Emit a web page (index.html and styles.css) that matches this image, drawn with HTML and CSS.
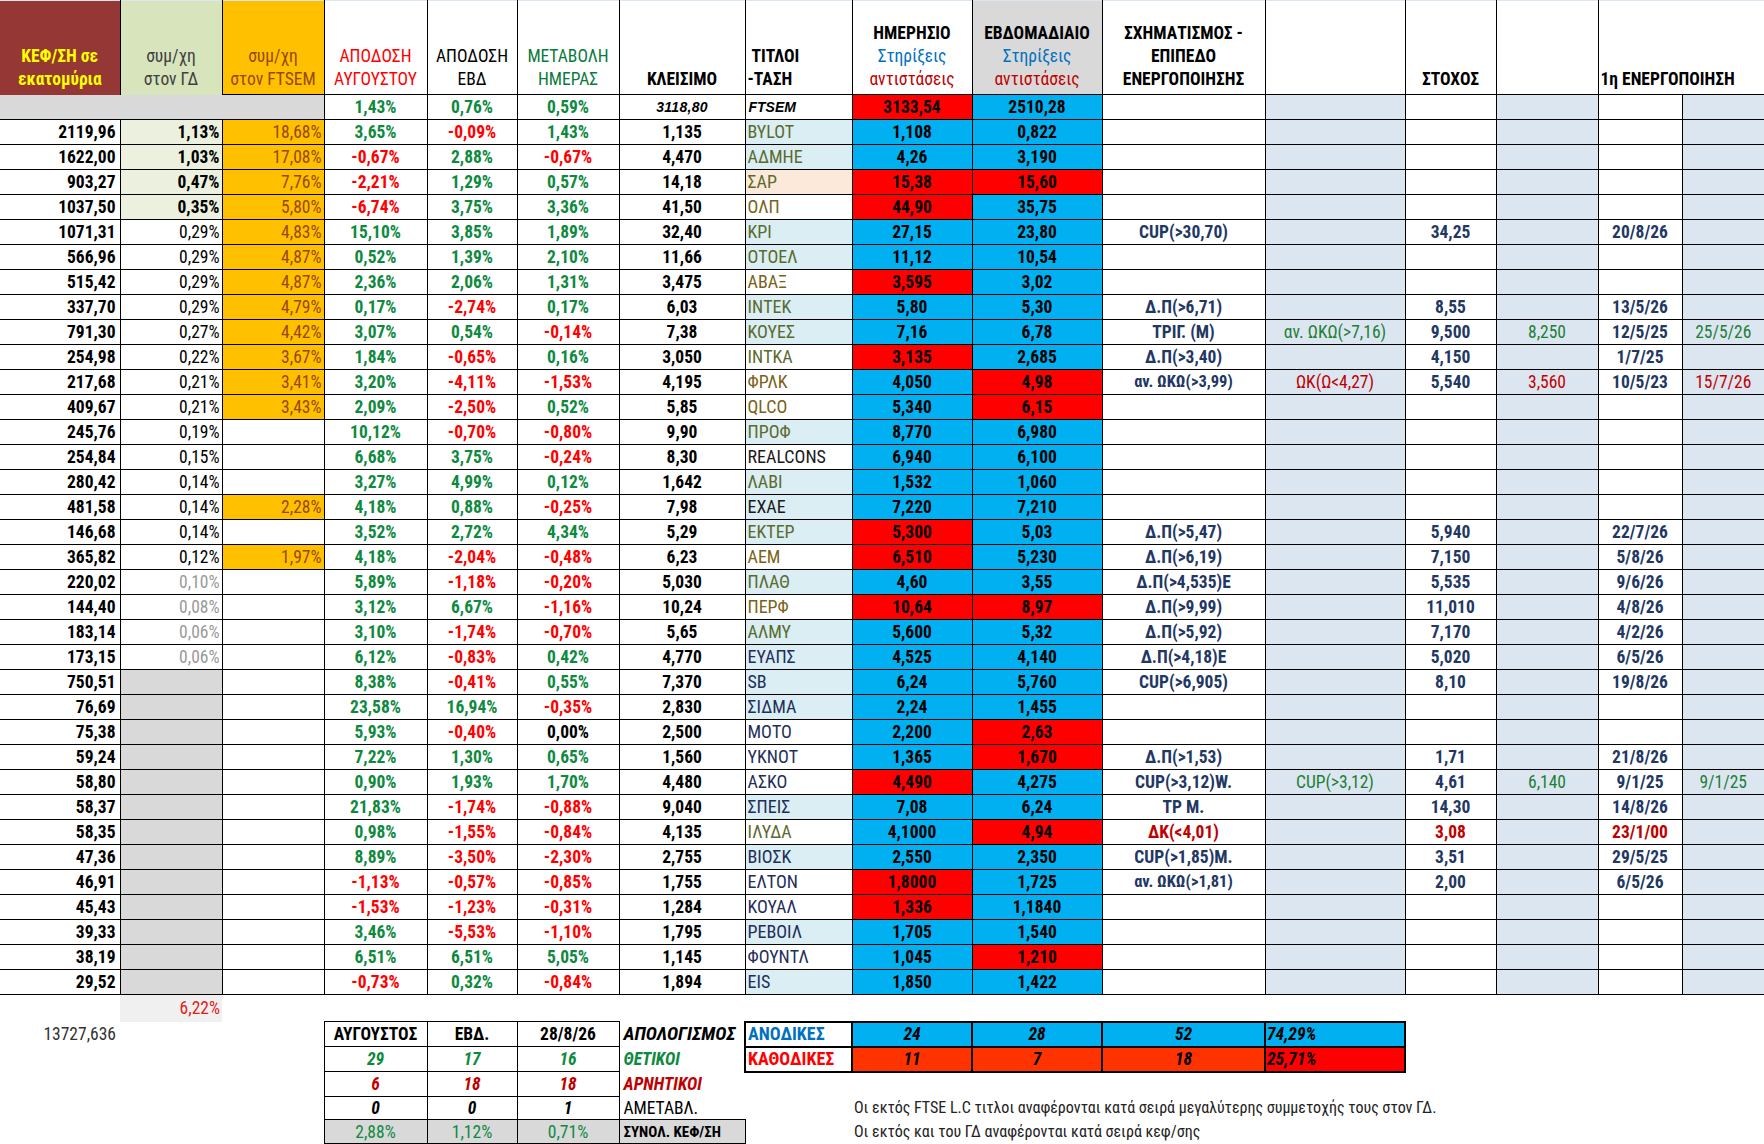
FILE: index.html
```html
<!DOCTYPE html>
<html lang="el">
<head>
<meta charset="utf-8">
<title>FTSEM</title>
<link rel="stylesheet" href="styles.css">
</head>
<body>
<table class="sheet">
<colgroup>
<col style="width:120px"><col style="width:102px"><col style="width:102px"><col style="width:103px"><col style="width:90px"><col style="width:102px"><col style="width:126px"><col style="width:107px"><col style="width:120px"><col style="width:130px"><col style="width:163px"><col style="width:140px"><col style="width:91px"><col style="width:102px"><col style="width:84px"><col style="width:82px">
</colgroup>
<tbody class="head">
<tr class="hd">
<td class="h0">ΚΕΦ/ΣΗ σε<br>εκατομύρια</td>
<td class="h1">συμ/χη<br>στον ΓΔ</td>
<td class="h2">συμ/χη<br>στον FTSEM</td>
<td class="h3">ΑΠΟΔΟΣΗ<br>ΑΥΓΟΥΣΤΟΥ</td>
<td class="h4">ΑΠΟΔΟΣΗ<br>ΕΒΔ</td>
<td class="h5">ΜΕΤΑΒΟΛΗ<br>ΗΜΕΡΑΣ</td>
<td class="hb">ΚΛΕΙΣΙΜΟ</td>
<td class="hb hl">&nbsp;ΤΙΤΛΟΙ<br>-ΤΑΣΗ</td>
<td class="hb">ΗΜΕΡΗΣΙΟ<br><span class="sup">Στηρίξεις</span><br><span class="res">αντιστάσεις</span></td>
<td class="hb h9">ΕΒΔΟΜΑΔΙΑΙΟ<br><span class="sup">Στηρίξεις</span><br><span class="res">αντιστάσεις</span></td>
<td class="hb">ΣΧΗΜΑΤΙΣΜΟΣ -<br>ΕΠΙΠΕΔΟ<br>ΕΝΕΡΓΟΠΟΙΗΣΗΣ</td>
<td class="hb"></td>
<td class="hb">ΣΤΟΧΟΣ</td>
<td class="hb"></td>
<td class="hb hl" colspan="2">1η ΕΝΕΡΓΟΠΟΙΗΣΗ</td>
</tr>
<tr class="ix">
<td colspan="3" class="ixg"></td>
<td class="g">1,43%</td><td class="g">0,76%</td><td class="g">0,59%</td>
<td class="ixc">3118,80</td>
<td class="ixt">FTSEM</td>
<td class="R">3133,54</td><td class="B">2510,28</td>
<td></td><td class="lb"></td><td></td><td class="lb"></td><td></td><td class="lb"></td>
</tr>
</tbody>
<tbody class="data">
<tr><td>2119,96</td><td class="gl">1,13%</td><td class="or">18,68%</td><td class="g">3,65%</td><td class="r">-0,09%</td><td class="g">1,43%</td><td>1,135</td><td class="tl ol">BYLOT</td><td class="B">1,108</td><td class="B">0,822</td><td></td><td></td><td></td><td></td><td></td><td></td></tr>
<tr><td>1622,00</td><td class="gl">1,03%</td><td class="or">17,08%</td><td class="r">-0,67%</td><td class="g">2,88%</td><td class="r">-0,67%</td><td>4,470</td><td class="tl ol">ΑΔΜΗΕ</td><td class="B">4,26</td><td class="B">3,190</td><td></td><td></td><td></td><td></td><td></td><td></td></tr>
<tr><td>903,27</td><td class="gl">0,47%</td><td class="or">7,76%</td><td class="r">-2,21%</td><td class="g">1,29%</td><td class="g">0,57%</td><td>14,18</td><td class="tp ol">ΣΑΡ</td><td class="R">15,38</td><td class="R">15,60</td><td></td><td></td><td></td><td></td><td></td><td></td></tr>
<tr><td>1037,50</td><td class="gl">0,35%</td><td class="or">5,80%</td><td class="r">-6,74%</td><td class="g">3,75%</td><td class="g">3,36%</td><td>41,50</td><td class="br">ΟΛΠ</td><td class="R">44,90</td><td class="B">35,75</td><td></td><td></td><td></td><td></td><td></td><td></td></tr>
<tr><td>1071,31</td><td>0,29%</td><td class="or">4,83%</td><td class="g">15,10%</td><td class="g">3,85%</td><td class="g">1,89%</td><td>32,40</td><td class="tl ol">ΚΡΙ</td><td class="B">27,15</td><td class="B">23,80</td><td>CUP(&gt;30,70)</td><td></td><td>34,25</td><td></td><td>20/8/26</td><td></td></tr>
<tr><td>566,96</td><td>0,29%</td><td class="or">4,87%</td><td class="g">0,52%</td><td class="g">1,39%</td><td class="g">2,10%</td><td>11,66</td><td class="tl ol">ΟΤΟΕΛ</td><td class="B">11,12</td><td class="B">10,54</td><td></td><td></td><td></td><td></td><td></td><td></td></tr>
<tr><td>515,42</td><td>0,29%</td><td class="or">4,87%</td><td class="g">2,36%</td><td class="g">2,06%</td><td class="g">1,31%</td><td>3,475</td><td class="br">ΑΒΑΞ</td><td class="R">3,595</td><td class="B">3,02</td><td></td><td></td><td></td><td></td><td></td><td></td></tr>
<tr><td>337,70</td><td>0,29%</td><td class="or">4,79%</td><td class="g">0,17%</td><td class="r">-2,74%</td><td class="g">0,17%</td><td>6,03</td><td class="tl ol">ΙΝΤΕΚ</td><td class="B">5,80</td><td class="B">5,30</td><td>Δ.Π(&gt;6,71)</td><td></td><td>8,55</td><td></td><td>13/5/26</td><td></td></tr>
<tr><td>791,30</td><td>0,27%</td><td class="or">4,42%</td><td class="g">3,07%</td><td class="g">0,54%</td><td class="r">-0,14%</td><td>7,38</td><td class="tl ol">ΚΟΥΕΣ</td><td class="B">7,16</td><td class="B">6,78</td><td>ΤΡΙΓ. (Μ)</td><td class="gn">αν. ΩΚΩ(&gt;7,16)</td><td>9,500</td><td class="gn">8,250</td><td>12/5/25</td><td class="gn">25/5/26</td></tr>
<tr><td>254,98</td><td>0,22%</td><td class="or">3,67%</td><td class="g">1,84%</td><td class="r">-0,65%</td><td class="g">0,16%</td><td>3,050</td><td class="ol">ΙΝΤΚΑ</td><td class="R">3,135</td><td class="B">2,685</td><td>Δ.Π(&gt;3,40)</td><td></td><td>4,150</td><td></td><td>1/7/25</td><td></td></tr>
<tr><td>217,68</td><td>0,21%</td><td class="or">3,41%</td><td class="g">3,20%</td><td class="r">-4,11%</td><td class="r">-1,53%</td><td>4,195</td><td class="br">ΦΡΛΚ</td><td class="B">4,050</td><td class="R">4,98</td><td class="sm">αν. ΩΚΩ(&gt;3,99)</td><td class="rn">ΩΚ(Ω&lt;4,27)</td><td>5,540</td><td class="rn">3,560</td><td>10/5/23</td><td class="rn">15/7/26</td></tr>
<tr><td>409,67</td><td>0,21%</td><td class="or">3,43%</td><td class="g">2,09%</td><td class="r">-2,50%</td><td class="g">0,52%</td><td>5,85</td><td class="br">QLCO</td><td class="B">5,340</td><td class="R">6,15</td><td></td><td></td><td></td><td></td><td></td><td></td></tr>
<tr><td>245,76</td><td>0,19%</td><td></td><td class="g">10,12%</td><td class="r">-0,70%</td><td class="r">-0,80%</td><td>9,90</td><td class="tl ol">ΠΡΟΦ</td><td class="B">8,770</td><td class="B">6,980</td><td></td><td></td><td></td><td></td><td></td><td></td></tr>
<tr><td>254,84</td><td>0,15%</td><td></td><td class="g">6,68%</td><td class="g">3,75%</td><td class="r">-0,24%</td><td>8,30</td><td class="dk">REALCONS</td><td class="B">6,940</td><td class="B">6,100</td><td></td><td></td><td></td><td></td><td></td><td></td></tr>
<tr><td>280,42</td><td>0,14%</td><td></td><td class="g">3,27%</td><td class="g">4,99%</td><td class="g">0,12%</td><td>1,642</td><td class="tl ol">ΛΑΒΙ</td><td class="B">1,532</td><td class="B">1,060</td><td></td><td></td><td></td><td></td><td></td><td></td></tr>
<tr><td>481,58</td><td>0,14%</td><td class="or">2,28%</td><td class="g">4,18%</td><td class="g">0,88%</td><td class="r">-0,25%</td><td>7,98</td><td class="tl dk">ΕΧΑΕ</td><td class="B">7,220</td><td class="B">7,210</td><td></td><td></td><td></td><td></td><td></td><td></td></tr>
<tr><td>146,68</td><td>0,14%</td><td></td><td class="g">3,52%</td><td class="g">2,72%</td><td class="g">4,34%</td><td>5,29</td><td class="tl ol">ΕΚΤΕΡ</td><td class="R">5,300</td><td class="B">5,03</td><td>Δ.Π(&gt;5,47)</td><td></td><td>5,940</td><td></td><td>22/7/26</td><td></td></tr>
<tr><td>365,82</td><td>0,12%</td><td class="or">1,97%</td><td class="g">4,18%</td><td class="r">-2,04%</td><td class="r">-0,48%</td><td>6,23</td><td class="br">ΑΕΜ</td><td class="R">6,510</td><td class="B">5,230</td><td>Δ.Π(&gt;6,19)</td><td></td><td>7,150</td><td></td><td>5/8/26</td><td></td></tr>
<tr><td>220,02</td><td class="gy">0,10%</td><td></td><td class="g">5,89%</td><td class="r">-1,18%</td><td class="r">-0,20%</td><td>5,030</td><td class="tl ol">ΠΛΑΘ</td><td class="B">4,60</td><td class="B">3,55</td><td>Δ.Π(&gt;4,535)Ε</td><td></td><td>5,535</td><td></td><td>9/6/26</td><td></td></tr>
<tr><td>144,40</td><td class="gy">0,08%</td><td></td><td class="g">3,12%</td><td class="g">6,67%</td><td class="r">-1,16%</td><td>10,24</td><td class="br">ΠΕΡΦ</td><td class="R">10,64</td><td class="R">8,97</td><td>Δ.Π(&gt;9,99)</td><td></td><td>11,010</td><td></td><td>4/8/26</td><td></td></tr>
<tr><td>183,14</td><td class="gy">0,06%</td><td></td><td class="g">3,10%</td><td class="r">-1,74%</td><td class="r">-0,70%</td><td>5,65</td><td class="tl ol">ΑΛΜΥ</td><td class="B">5,600</td><td class="B">5,32</td><td>Δ.Π(&gt;5,92)</td><td></td><td>7,170</td><td></td><td>4/2/26</td><td></td></tr>
<tr><td>173,15</td><td class="gy">0,06%</td><td></td><td class="g">6,12%</td><td class="r">-0,83%</td><td class="g">0,42%</td><td>4,770</td><td class="tl nv">ΕΥΑΠΣ</td><td class="B">4,525</td><td class="B">4,140</td><td>Δ.Π(&gt;4,18)Ε</td><td></td><td>5,020</td><td></td><td>6/5/26</td><td></td></tr>
<tr><td>750,51</td><td class="gr"></td><td></td><td class="g">8,38%</td><td class="r">-0,41%</td><td class="g">0,55%</td><td>7,370</td><td class="tl nv">SB</td><td class="B">6,24</td><td class="B">5,760</td><td>CUP(&gt;6,905)</td><td></td><td>8,10</td><td></td><td>19/8/26</td><td></td></tr>
<tr><td>76,69</td><td class="gr"></td><td></td><td class="g">23,58%</td><td class="g">16,94%</td><td class="r">-0,35%</td><td>2,830</td><td class="tl nv">ΣΙΔΜΑ</td><td class="B">2,24</td><td class="B">1,455</td><td></td><td></td><td></td><td></td><td></td><td></td></tr>
<tr><td>75,38</td><td class="gr"></td><td></td><td class="g">5,93%</td><td class="r">-0,40%</td><td>0,00%</td><td>2,500</td><td class="nv">ΜΟΤΟ</td><td class="B">2,200</td><td class="R">2,63</td><td></td><td></td><td></td><td></td><td></td><td></td></tr>
<tr><td>59,24</td><td class="gr"></td><td></td><td class="g">7,22%</td><td class="g">1,30%</td><td class="g">0,65%</td><td>1,560</td><td class="nv">ΥΚΝΟΤ</td><td class="B">1,365</td><td class="R">1,670</td><td>Δ.Π(&gt;1,53)</td><td></td><td>1,71</td><td></td><td>21/8/26</td><td></td></tr>
<tr><td>58,80</td><td class="gr"></td><td></td><td class="g">0,90%</td><td class="g">1,93%</td><td class="g">1,70%</td><td>4,480</td><td class="nv">ΑΣΚΟ</td><td class="R">4,490</td><td class="B">4,275</td><td>CUP(&gt;3,12)W.</td><td class="gn">CUP(&gt;3,12)</td><td>4,61</td><td class="gn">6,140</td><td>9/1/25</td><td class="gn">9/1/25</td></tr>
<tr><td>58,37</td><td class="gr"></td><td></td><td class="g">21,83%</td><td class="r">-1,74%</td><td class="r">-0,88%</td><td>9,040</td><td class="tl nv">ΣΠΕΙΣ</td><td class="B">7,08</td><td class="B">6,24</td><td>ΤΡ Μ.</td><td></td><td>14,30</td><td></td><td>14/8/26</td><td></td></tr>
<tr><td>58,35</td><td class="gr"></td><td></td><td class="g">0,98%</td><td class="r">-1,55%</td><td class="r">-0,84%</td><td>4,135</td><td class="ol">ΙΛΥΔΑ</td><td class="B">4,1000</td><td class="R">4,94</td><td class="rd">ΔΚ(&lt;4,01)</td><td></td><td class="rd">3,08</td><td></td><td class="rd">23/1/00</td><td></td></tr>
<tr><td>47,36</td><td class="gr"></td><td></td><td class="g">8,89%</td><td class="r">-3,50%</td><td class="r">-2,30%</td><td>2,755</td><td class="tl nv">ΒΙΟΣΚ</td><td class="B">2,550</td><td class="B">2,350</td><td>CUP(&gt;1,85)Μ.</td><td></td><td>3,51</td><td></td><td>29/5/25</td><td></td></tr>
<tr><td>46,91</td><td class="gr"></td><td></td><td class="r">-1,13%</td><td class="r">-0,57%</td><td class="r">-0,85%</td><td>1,755</td><td class="nv">ΕΛΤΟΝ</td><td class="R">1,8000</td><td class="B">1,725</td><td class="sm">αν. ΩΚΩ(&gt;1,81)</td><td></td><td>2,00</td><td></td><td>6/5/26</td><td></td></tr>
<tr><td>45,43</td><td class="gr"></td><td></td><td class="r">-1,53%</td><td class="r">-1,23%</td><td class="r">-0,31%</td><td>1,284</td><td class="nv">ΚΟΥΑΛ</td><td class="R">1,336</td><td class="B">1,1840</td><td></td><td></td><td></td><td></td><td></td><td></td></tr>
<tr><td>39,33</td><td class="gr"></td><td></td><td class="g">3,46%</td><td class="r">-5,53%</td><td class="r">-1,10%</td><td>1,795</td><td class="tl nv">ΡΕΒΟΙΛ</td><td class="B">1,705</td><td class="B">1,540</td><td></td><td></td><td></td><td></td><td></td><td></td></tr>
<tr><td>38,19</td><td class="gr"></td><td></td><td class="g">6,51%</td><td class="g">6,51%</td><td class="g">5,05%</td><td>1,145</td><td class="nv">ΦΟΥΝΤΛ</td><td class="B">1,045</td><td class="R">1,210</td><td></td><td></td><td></td><td></td><td></td><td></td></tr>
<tr><td>29,52</td><td class="gr"></td><td></td><td class="r">-0,73%</td><td class="g">0,32%</td><td class="r">-0,84%</td><td>1,894</td><td class="tl nv">EIS</td><td class="B">1,850</td><td class="B">1,422</td><td></td><td></td><td></td><td></td><td></td><td></td></tr>
</tbody>
<tbody class="foot">
<tr class="fa"><td></td><td class="f622">6,22%</td><td colspan="14"></td></tr>
<tr class="fb">
<td class="tot">13727,636</td><td></td><td></td>
<td class="sh">ΑΥΓΟΥΣΤΟΣ</td><td class="sh">ΕΒΔ.</td><td class="sh">28/8/26</td>
<td class="lbl bi big">ΑΠΟΛΟΓΙΣΜΟΣ</td>
<td class="th lab an">ΑΝΟΔΙΚΕΣ</td><td class="th cnt up">24</td><td class="th cnt up">28</td><td class="th cnt up">52</td><td class="th pct up">74,29%</td>
<td colspan="4"></td>
</tr>
<tr class="fb">
<td></td><td></td><td></td>
<td class="sc bi gg">29</td><td class="sc bi gg">17</td><td class="sc bi gg">16</td>
<td class="lbl bi gg">ΘΕΤΙΚΟΙ</td>
<td class="th lab ka">ΚΑΘΟΔΙΚΕΣ</td><td class="th cnt dn">11</td><td class="th cnt dn">7</td><td class="th cnt dn">18</td><td class="th pct dn2">25,71%</td>
<td colspan="4"></td>
</tr>
<tr class="fb">
<td></td><td></td><td></td>
<td class="sc bi dr">6</td><td class="sc bi dr">18</td><td class="sc bi dr">18</td>
<td class="lbl bi dr">ΑΡΝΗΤΙΚΟΙ</td>
<td colspan="9"></td>
</tr>
<tr class="fe">
<td></td><td></td><td></td>
<td class="sc bi">0</td><td class="sc bi">0</td><td class="sc bi">1</td>
<td class="lbl">ΑΜΕΤΑΒΛ.</td>
<td></td>
<td colspan="8" class="note">Οι εκτός FTSE L.C τιτλοι αναφέρονται κατά σειρά μεγαλύτερης συμμετοχής τους στον ΓΔ.</td>
</tr>
<tr class="ff">
<td></td><td></td><td></td>
<td class="sc sg">2,88%</td><td class="sc sg">1,12%</td><td class="sc sg">0,71%</td>
<td class="lbl sum">ΣΥΝΟΛ. ΚΕΦ/ΣΗ</td>
<td></td>
<td colspan="8" class="note">Οι εκτός και του ΓΔ αναφέρονται κατά σειρά κεφ/σης</td>
</tr>
</tbody>
</table>
</body>
</html>
```

FILE: styles.css
```css
* { box-sizing: border-box; }
html, body { margin: 0; padding: 0; background: #fff; }
body {
  font-family: "Roboto Condensed", "Roboto", "Liberation Sans", sans-serif;
  font-stretch: condensed;
  font-size: 17.5px;
  color: #000;
}
.sheet {
  border-collapse: collapse;
  table-layout: fixed;
  width: 1764px;
}
.sheet td {
  padding: 0 3px;
  white-space: nowrap;
  line-height: 20px;
}

/* header */
.hd { height: 94px; }
.hd td {
  vertical-align: bottom;
  text-align: center;
  line-height: 23px;
  padding-bottom: 3px;
  border: 1px solid #000;
  border-top: 1px solid #dce6f1;
  font-size: 17.5px;
  background: #fff;
}
.hd td:first-child { border-left: none; }
.hd td:last-child { border-right: none; }
.hd .h0 { background: #953735; color: #ffff00; font-weight: bold; border-bottom: none; vertical-align: middle; padding-top: 40px; padding-bottom: 0; }
.hd .h1 { background: #d8e4bc; color: #404040; border-bottom: none; vertical-align: middle; padding-top: 40px; padding-bottom: 0; }
.hd .h2 { background: #ffc000; color: #984806; vertical-align: middle; padding-top: 40px; padding-bottom: 0; }
.hd .h3 { color: #ff0000; }
.hd .h4 { color: #000; }
.hd .h5 { color: #0b7a3e; }
.hd .hb { font-weight: bold; }
.hd .hl { text-align: left; padding-left: 2px; }
.hd .h9 { background: #d9d9d9; }
.sup { color: #0070c0; font-weight: normal; }
.res { color: #c00000; font-weight: normal; }

/* index row */
.ix { height: 25px; }
.ix td {
  border: 1px solid #000;
  text-align: center;
  font-weight: bold;
}
.ix .ixg { background: #d9d9d9; border-top: none; border-left: none; }
.ix .ixc { font-family: "Liberation Sans", Arial, sans-serif; font-style: italic; font-weight: 900; font-size: 14px; letter-spacing: 0.3px; }
.ix .ixt { font-family: "Liberation Sans", Arial, sans-serif; font-style: italic; font-weight: 900; font-size: 14px; text-align: left; padding-left: 3px; }
.ix td:last-child { border-right: none; }

/* data rows */
.data tr { height: 25px; }
.data td {
  border: 1px solid #000;
  text-align: center;
  font-weight: bold;
}
.data td:nth-child(1) { text-align: right; border-left: none; padding-right: 4px; }
.data td:nth-child(2) { text-align: right; font-weight: normal; padding-right: 2px; }
.data td:nth-child(3) { text-align: right; font-weight: normal; padding-right: 2px; }
.data td:nth-child(8) { text-align: left; font-weight: normal; font-size: 18px; padding-left: 2px; }
.data td:nth-child(n+11) { color: #1f3864; }
.data td:nth-child(12), .data td:nth-child(14), .data td:nth-child(16) { background: #dce6f1; }
.data td:nth-child(16) { border-right: none; }
.lb { background: #dce6f1; }

.g { color: #0e8a40; }
.r { color: #ff0000; }
.data td.gy { color: #9a9a9a; }
.data td.gl { background: #ebf1de; font-weight: bold; }
.gr { background: #d9d9d9; }
.or { background: #ffc000; color: #984806; }
.tl { background: #daeef3; }
.tp { background: #fde9d9; }
.ol { color: #5b6b2f; }
.br { color: #7a6218; }
.dk { color: #1a1a1a; }
.nv { color: #1f2f5a; }
.B { background: #00b0f0; }
.R { background: #ff0000; }
.data td.gn { color: #1d7f35; font-weight: normal; }
.data td.rn { color: #c00000; font-weight: normal; }
.data td.rd { color: #c00000; }
.sm { font-size: 16.5px; }

/* footer */
.foot td { border: none; background: #fff; }
.fa { height: 27px; }
.fb { height: 25px; }
.fe { height: 23px; }
.ff { height: 24px; }
.foot .f622 { background: #f0f0f0; color: #e02020; text-align: right; padding-right: 2px; }
.foot .tot { color: #333; text-align: right; padding-right: 4px; }
.foot .sc { border: 1px solid #000; text-align: center; }
.foot .sh { border: 1px solid #000; text-align: center; font-weight: bold; }
.bi { font-weight: bold; font-style: italic; }
.foot .big { font-size: 19px; }
.gg { color: #0e8a40; }
.dr { color: #c00000; }
.foot .sg { background: #d9d9d9; color: #0e8a40; }
.foot .lbl { text-align: left; padding-left: 4px; }
.foot .sum { background: #d9d9d9; border: 1px solid #000; font-weight: bold; font-size: 15px; }
.foot .th { border: 2px solid #000; }
.foot .lab { font-weight: bold; padding-left: 2px; text-align: left; font-size: 18px; }
.foot .an { color: #0070c0; }
.foot .ka { color: #ff0000; }
.foot .cnt { text-align: center; font-weight: bold; font-style: italic; }
.foot .pct { text-align: left; font-weight: bold; font-style: italic; padding-left: 1px; }
.foot .up { background: #00b0f0; }
.foot .dn { background: #ff3300; }
.foot .dn2 { background: #ff0000; }
.foot .note { color: #222; font-size: 16px; padding-left: 2px; text-align: left; }
```
